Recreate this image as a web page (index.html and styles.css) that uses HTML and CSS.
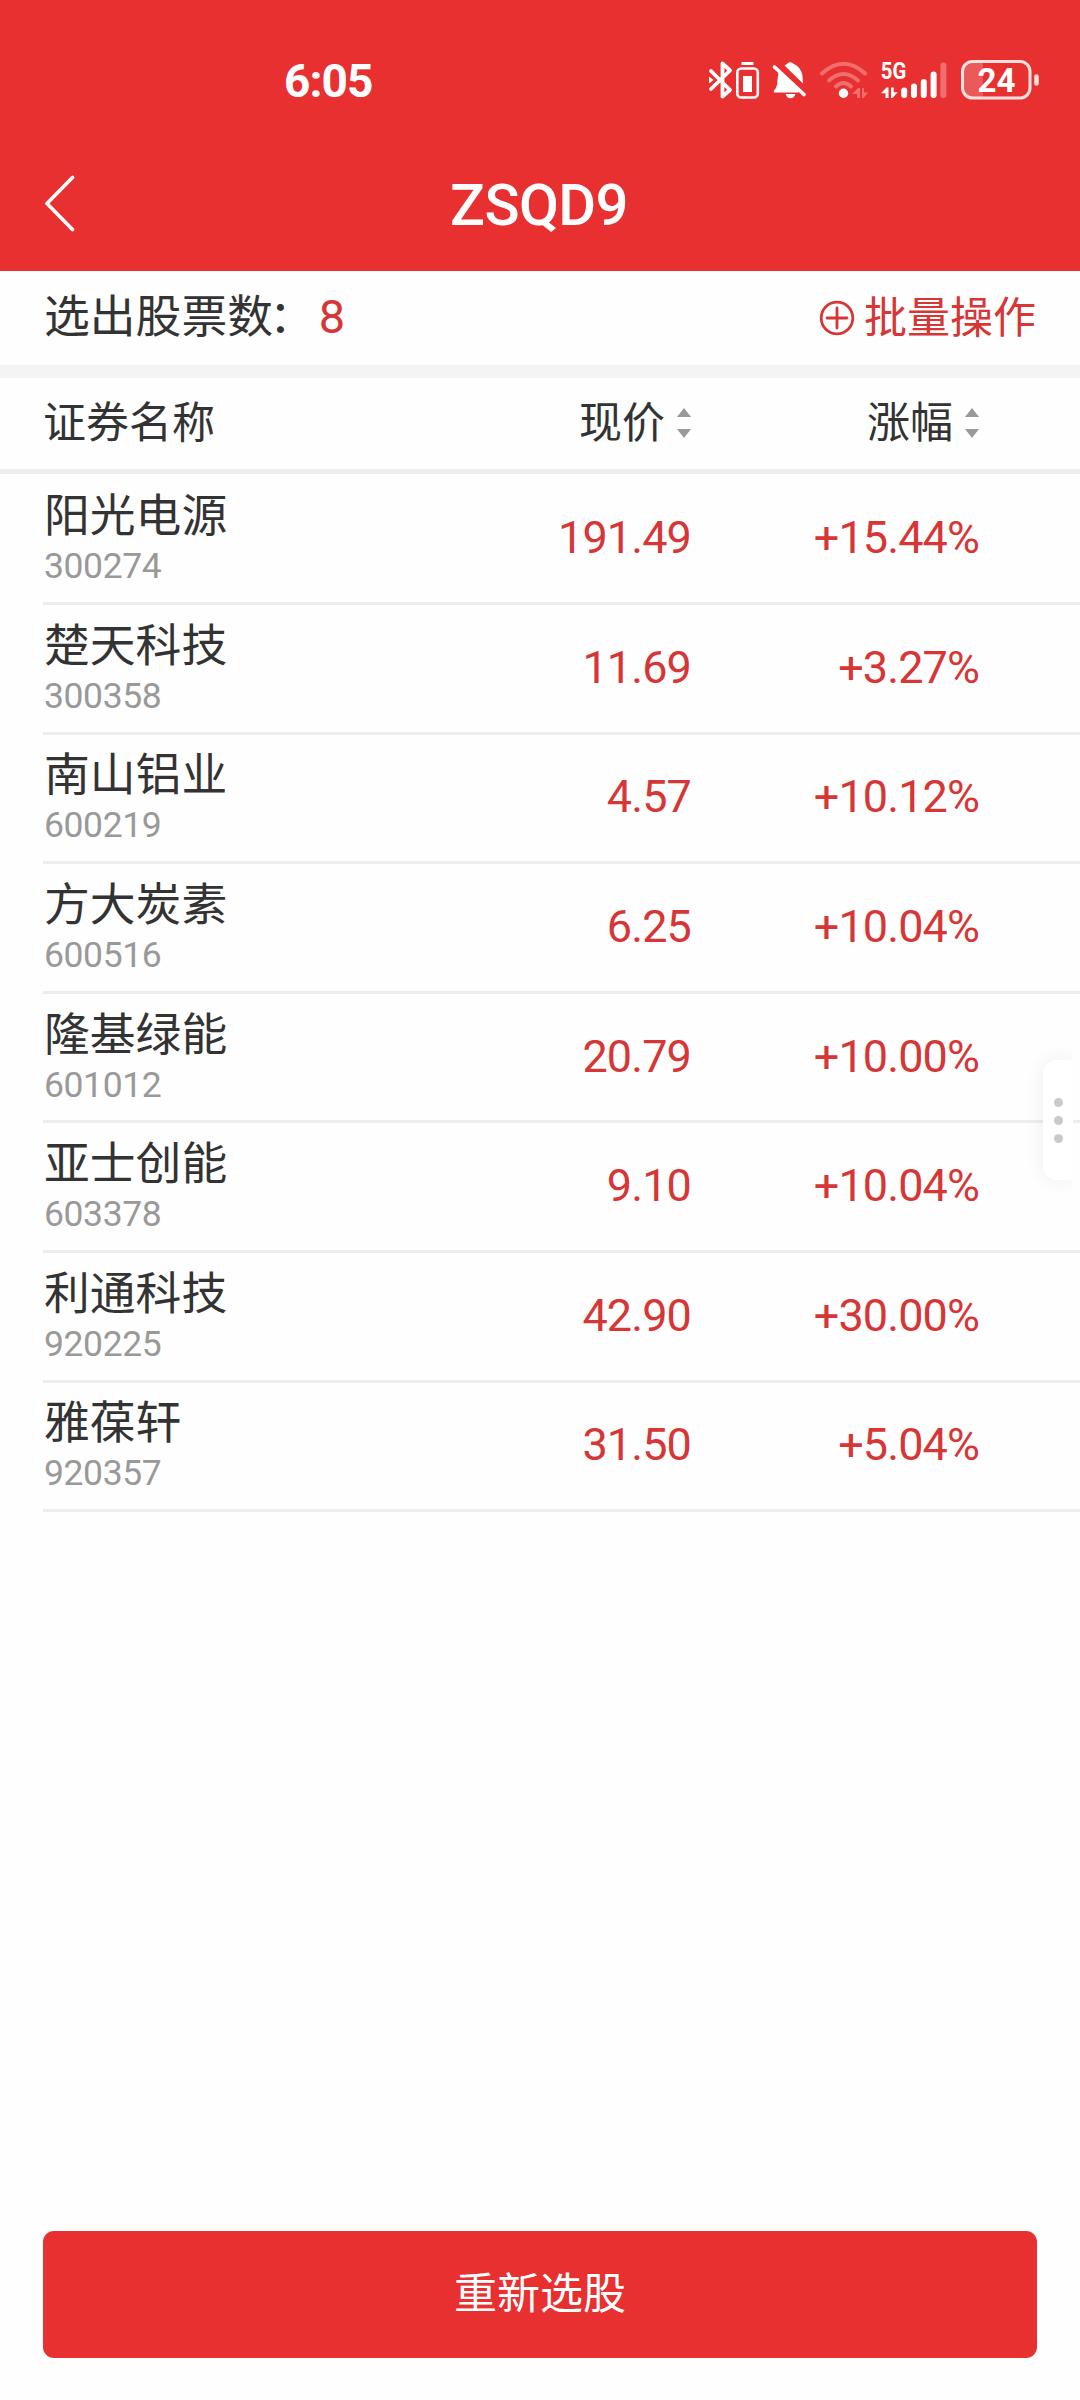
FILE: index.html
```html
<!DOCTYPE html>
<html lang="zh-CN">
<head>
<meta charset="utf-8">
<title>ZSQD9</title>
<link rel="stylesheet" href="styles.css">
</head>
<body>
<div class="screen">
  <header class="top">
    <div class="status">
      <span class="clock">6:05</span>
      <div class="status-icons">
        <svg width="56" height="60" viewBox="18 10 56 60" fill="none" stroke="#fff">
          <path d="M21 31L40 50L32.5 56.5V23.5L40 30.500L21 49" stroke-width="3.8" stroke-linejoin="round" stroke-linecap="round"/>
          <path d="M19 36.500l4.500 3.500l-4.500 3.500z" fill="#fff" stroke="none"/>
          <rect x="47.300" y="28.500" width="20.500" height="29" rx="4" stroke-width="2.600"/>
          <path d="M51.500 23.500h12" stroke-width="3"/>
          <rect x="53" y="36" width="9" height="16" fill="#fff" stroke="none"/>
        </svg>
        <svg width="50" height="60" viewBox="74 10 50 60" fill="#fff">
          <path d="M94.500 25.500Q96.500 24.500 97.500 23.500Q100 21 103 23.500Q111 26.500 112.500 36L113 43.500Z"/>
          <path d="M88.500 31L108.500 50.800V52.500H85Q83 52.500 84 50.500Q86.500 48 87 45Z"/>
          <path d="M95.500 54h10q-1.500 4.200-5 4.200t-5-4.200z"/>
          <path d="M84.500 27L114 54.500" stroke="#fff" stroke-width="3.600" stroke-linecap="round"/>
        </svg>
        <svg width="62" height="60" viewBox="124 10 62 60" fill="none" stroke="#fff" stroke-linecap="round">
          <g opacity=".3" stroke-width="4">
            <path d="M132 33.500Q153.500 14 175 33.500"/>
            <path d="M139 40.500Q153.500 27.500 168 40.500"/>
            <path d="M146 46.500Q153.500 39.500 161 46.500"/>
          </g>
          <circle cx="153.500" cy="53.300" r="4.700" fill="#fff" stroke="none"/>
          <path opacity=".3" fill="#fff" stroke="none" d="M162 54l6-6h2v10h-3v-4zM172 48h2v4.500h4L173.500 58H172z"/>
        </svg>
        <svg width="84" height="60" viewBox="186 10 84 60" fill="#fff">
          <text class="network" x="190.800" y="39.300" textLength="25.500" lengthAdjust="spacingAndGlyphs">5G</text>
          <path d="M191 53.200l5.500-5.800h2V58h-3v-4.800zM201 47.400h2.700v4.800h4L202.500 58H201z"/>
          <g stroke="#fff" stroke-width="6" stroke-linecap="round">
            <path d="M214.200 50.500V55M224 46.500V55M233.800 42V55M243.600 34.500V55"/>
            <path d="M253.400 25.500V55" opacity=".3"/>
          </g>
        </svg>
        <svg width="80" height="60" viewBox="270 10 80 60">
          <path d="M273 31q0-9 9-9h1v35h-1q-9 0-9-9zM282 22h11v35h-11z" fill="#fff" opacity=".2"/>
          <rect x="272.500" y="21.500" width="67.500" height="36.500" rx="10" fill="none" stroke="#fff" stroke-width="3" opacity=".85"/>
          <path d="M346.500 36.500v7" stroke="#fff" stroke-width="4.500" stroke-linecap="round" opacity=".85"/>
          <text class="charge" x="306.500" y="52" text-anchor="middle" textLength="38" lengthAdjust="spacingAndGlyphs">24</text>
        </svg>
      </div>
    </div>
    <div class="navbar">
      <svg class="back" width="34" height="60" viewBox="0 0 34 60" fill="none" stroke="#fff" stroke-width="3.600" stroke-linecap="round" stroke-linejoin="round"><path d="M29.500 2.500L4 28.500L29.500 54.500"/></svg>
      <h1 class="title">ZSQD9</h1>
    </div>
  </header>

  <section class="summary">
    <div class="count-label">选出股票数<span class="colon">：</span><span class="count">8</span></div>
    <div class="batch">
      <svg width="36" height="36" viewBox="0 0 36 36" fill="none" stroke="#d63636" stroke-width="2.800"><circle cx="18" cy="18" r="15.800"/><path d="M8 18h20M18 8v20" stroke-linecap="round"/></svg>
      <span>批量操作</span>
    </div>
  </section>

  <div class="row head">
    <span>证券名称</span>
    <span class="sort">现价<svg width="14" height="30" viewBox="0 0 14 30" fill="#999"><path d="M0 9L7 0L14 9zM0 21H14L7 30z"/></svg></span>
    <span class="sort">涨幅<svg width="14" height="30" viewBox="0 0 14 30" fill="#999"><path d="M0 9L7 0L14 9zM0 21H14L7 30z"/></svg></span>
  </div>

  <main class="list">
    <div class="row stock"><div><div class="name">阳光电源</div><div class="code">300274</div></div><span class="num">191.49</span><span class="num">+15.44%</span></div>
    <div class="row stock"><div><div class="name">楚天科技</div><div class="code">300358</div></div><span class="num">11.69</span><span class="num">+3.27%</span></div>
    <div class="row stock"><div><div class="name">南山铝业</div><div class="code">600219</div></div><span class="num">4.57</span><span class="num">+10.12%</span></div>
    <div class="row stock"><div><div class="name">方大炭素</div><div class="code">600516</div></div><span class="num">6.25</span><span class="num">+10.04%</span></div>
    <div class="row stock"><div><div class="name">隆基绿能</div><div class="code">601012</div></div><span class="num">20.79</span><span class="num">+10.00%</span></div>
    <div class="row stock"><div><div class="name">亚士创能</div><div class="code">603378</div></div><span class="num">9.10</span><span class="num">+10.04%</span></div>
    <div class="row stock"><div><div class="name">利通科技</div><div class="code">920225</div></div><span class="num">42.90</span><span class="num">+30.00%</span></div>
    <div class="row stock"><div><div class="name">雅葆轩</div><div class="code">920357</div></div><span class="num">31.50</span><span class="num">+5.04%</span></div>
  </main>

  <button class="reselect">重新选股</button>
  <div class="handle"><div class="handle-tab"><i></i><i></i><i></i></div></div>
</div>
</body>
</html>
```
FILE: styles.css
```css
* { box-sizing: border-box; }
body { margin: 0; background: #fefefe; color: #333; font-family: "Noto Sans CJK SC", sans-serif; }
.screen { position: relative; width: 1080px; height: 2400px; display: flex; flex-direction: column; overflow: hidden; }

.top { height: 271px; background: #e83030; color: #fff; }
.status { height: 136px; padding: 48px 40px 0 284px; display: flex; justify-content: space-between; }
.clock { font: 700 46px/66px Roboto, sans-serif; letter-spacing: -0.9px; }
.status-icons { display: flex; align-items: center; height: 64px; }
.status-icons svg { flex: none; }
.network { font: 700 24px Roboto, sans-serif; }
.charge { font: 700 34px Roboto, sans-serif; fill: #fff; }
.navbar { height: 135px; display: grid; grid-template-columns: 160px 1fr 160px; align-items: center; }
.back { margin-left: 43px; }
.title { margin: 0; padding: 2px 2px 0 0; text-align: center; font: 500 58px/135px Roboto, sans-serif; letter-spacing: -0.6px; }

.summary { height: 107px; border-bottom: 13px solid #f4f4f4; padding: 0 44px 0 44px; display: flex; justify-content: space-between; font-size: 45.8px; line-height: 84px; }
.colon { margin: 0 4px 0 -4px; }
.count { font-family: Roboto, sans-serif; font-size: 47px; }
.count, .batch { color: #d63636; }
.batch { display: flex; align-items: center; gap: 9px; height: 94px; font-size: 43px; }
.batch span { padding-bottom: 9px; }

.row { display: grid; grid-template-columns: 400px 248px 288px; align-items: center; }
.head { height: 96px; padding-left: 43px; border-bottom: 5px solid #ededed; font-size: 43px; line-height: 82px; }
.head > span { padding-bottom: 9px; }
.sort { display: flex; align-items: center; justify-content: flex-end; gap: 12px; }
.sort svg { position: relative; top: 4px; }
.list { padding: 1.4px 0 0 43px; flex: 1; }
.stock { height: 129.6px; border-bottom: 3px solid #ededed; }
.name { padding-left: 1px; font-size: 45.8px; line-height: 52px; }
.code { padding: 6px 0 3px 1px; font: 35.5px/44px Roboto, sans-serif; letter-spacing: -0.4px; color: #999; }
.num { padding-bottom: 1px; text-align: right; font: 45px/60px Roboto, sans-serif; letter-spacing: -0.9px; color: #d63636; }

.reselect { height: 127px; margin: 0 43px 42px; padding: 0 0 9px; border: 0; border-radius: 11px; background: #e83030; color: #fff; font-family: inherit; font-size: 43px; }

/* edge handle floating over the list */
.handle { position: absolute; right: 7px; top: 1030px; width: 60px; height: 180px; padding: 30px 0 30px 30px; overflow: hidden; }
.handle-tab { height: 120px; display: flex; flex-direction: column; align-items: center; justify-content: center; gap: 9px; background: rgba(255,255,255,.92); border-radius: 14px 0 0 14px; box-shadow: 0 0 20px rgba(0,0,0,.07); }
.handle-tab i { width: 9px; height: 9px; border-radius: 50%; background: #cacaca; }
```
